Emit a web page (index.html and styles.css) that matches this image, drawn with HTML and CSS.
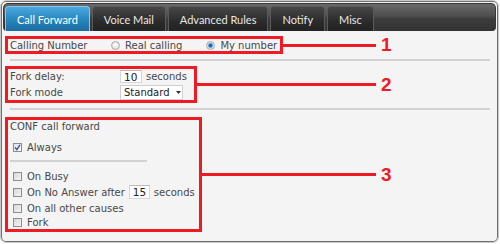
FILE: index.html
```html
<!DOCTYPE html>
<html>
<head>
<meta charset="utf-8">
<link rel="stylesheet" href="styles.css">
</head>
<body>
<div class="frame">
  <nav class="tabbar">
    <span class="tab active">Call Forward</span>
    <span class="tab">Voice Mail</span>
    <span class="tab">Advanced Rules</span>
    <span class="tab">Notify</span>
    <span class="tab">Misc</span>
  </nav>
  <main class="content">
    <section class="annot">
      <div class="box box-calling">
        <span class="label lbl-calling">Calling Number</span>
        <span class="choice"><span class="radio"></span>Real calling</span>
        <span class="choice choice-2"><span class="radio on"></span>My number</span>
      </div>
      <span class="leader"></span><span class="num">1</span>
    </section>
    <div class="rule"></div>
    <section class="annot">
      <div class="box box-fork">
        <div class="frow frow-1"><span class="label lbl-fork">Fork delay:</span><span class="field field-delay">10</span><span class="unit">seconds</span></div>
        <div class="frow frow-2"><span class="label lbl-fork">Fork mode</span><span class="select">Standard<svg class="caret" width="5" height="3" viewBox="0 0 5 3"><path d="M0 0H5L2.5 3Z" fill="#333"/></svg></span></div>
      </div>
      <span class="leader"></span><span class="num">2</span>
    </section>
    <div class="rule rule-2"></div>
    <section class="annot">
      <div class="box box-conf">
        <div class="title">CONF call forward</div>
        <div class="opt opt-always"><span class="cb on"><svg width="7" height="7" viewBox="0 0 7 7"><path d="M1 3.4 L2.8 5.6 L6 0.8" fill="none" stroke="#2b4fa6" stroke-width="1.3"/></svg></span>Always</div>
        <div class="rule rule-short"></div>
        <div class="opts">
          <div class="opt"><span class="cb"></span>On Busy</div>
          <div class="opt"><span class="cb"></span>On No Answer after<span class="field field-na">15</span><span class="unit">seconds</span></div>
          <div class="opt"><span class="cb"></span>On all other causes</div>
          <div class="opt opt-last"><span class="cb"></span>Fork</div>
        </div>
      </div>
      <span class="leader"></span><span class="num">3</span>
    </section>
  </main>
</div>
</body>
</html>
```
FILE: styles.css
```css
* { box-sizing: border-box; margin: 0; padding: 0; }
html, body { width: 500px; height: 244px; background: #ffffff; overflow: hidden; }
body {
  font-family: "DejaVu Sans", Verdana, sans-serif;
  font-size: 10px;
  color: #484848;
}
.frame {
  width: 499px;
  height: 243px;
  border: 1px solid #c9c9c9;
  border-radius: 6px;
  padding: 2px;
  background: #f4f4f4;
  box-shadow: inset 0 0 0 1px #707070;
  display: flex;
  flex-direction: column;
}
.tabbar {
  height: 28px;
  flex: none;
  display: flex;
  align-items: flex-end;
  gap: 2px;
  padding-left: 1px;
  border: 1px solid #383838;
  border-bottom: none;
  border-radius: 5px 5px 4px 4px;
  background: linear-gradient(#6a6a6a, #4e4e4e 45%, #3c3c3c 55%, #333333);
}
.tab {
  height: 25px;
  display: flex;
  align-items: center;
  padding: 0 11px 0 11px;
  border: 1px solid #5a5a5a;
  border-bottom: none;
  border-radius: 4px 4px 0 0;
  background: linear-gradient(#474747, #2b2b2b 60%, #222222);
  color: #e8e8e8;
  font-family: Lato, "DejaVu Sans", sans-serif;
  font-size: 11px;
}
.tab.active {
  background: linear-gradient(#4aa8de, #2a88c0 50%, #1b6c9f);
  border-color: #84c8ee;
  color: #ffffff;
}
.content {
  flex: 1;
  display: flex;
  flex-direction: column;
  padding: 5px 2px 0 2px;
}
.annot {
  width: 388px;
  display: flex;
  align-items: center;
}
.box {
  border: 3px solid #ed1c24;
  padding-left: 2px;
  flex: none;
}
.leader {
  flex: 1;
  height: 3px;
  background: #ed1c24;
}
.num {
  width: 12px;
  margin-left: 5px;
  color: #ed1c24;
  font-family: "Liberation Sans", Arial, sans-serif;
  font-weight: bold;
  font-size: 19px;
  line-height: 16px;
}
.rule {
  height: 2px;
  background: #d2d2d2;
  width: 480px;
  margin: 5px 0 5px 5px;
}
.rule-2 { margin-bottom: 7px; }
.rule-short {
  width: 137px;
  margin: 6px 0 6px 0;
}
.label { flex: none; }
.box-calling {
  height: 18px;
  display: flex;
  align-items: center;
  padding-right: 3px;
}
.lbl-calling { width: 101px; }
.choice { display: flex; align-items: center; }
.choice-2 { margin-left: 24px; }
.radio {
  width: 9px;
  height: 9px;
  border-radius: 50%;
  border: 1px solid #a8a8a8;
  background: radial-gradient(circle at 50% 40%, #ffffff, #d4d4d4);
  margin-right: 5px;
}
.radio.on {
  background: radial-gradient(circle, #1c6cc4 0 1.5px, #7fb0d8 2.2px, #e4e4e4 3px);
}
.box-fork {
  width: 192px;
  height: 37px;
  display: flex;
  flex-direction: column;
}
.frow { display: flex; align-items: center; }
.frow-1 { height: 15px; }
.frow-2 { height: 16px; }
.lbl-fork { width: 110px; }
.field {
  display: flex;
  align-items: center;
  height: 13px;
  background: #ffffff;
  border: 1px solid #d6d6d6;
  border-top-color: #bdbdbd;
  font-size: 10.5px;
  color: #222;
  padding-left: 3px;
}
.field-delay { width: 22px; }
.unit { margin-left: 4px; }
.select {
  display: flex;
  align-items: center;
  flex: none;
  width: 63px;
  height: 15px;
  background: #ffffff;
  border: 1px solid #cfcfcf;
  font-size: 10px;
  color: #222;
  padding-left: 3px;
}
.caret { margin-left: 6px; flex: none; }
.box-conf {
  width: 197px;
  height: 115px;
  display: flex;
  flex-direction: column;
}
.title {
  height: 12px;
  line-height: 12px;
  margin-top: 1px;
}
.opt {
  display: flex;
  align-items: center;
  height: 16px;
  padding-left: 3px;
}
.opt-always { margin-top: 8px; height: 14px; }
.opt-last { height: 13px; }
.cb {
  width: 9px;
  height: 9px;
  flex: none;
  border: 1px solid #8e8e8e;
  background: linear-gradient(135deg, #d6d6d6, #f6f6f6);
  margin-right: 5px;
  display: flex;
  align-items: center;
  justify-content: center;
}
.cb.on { background: linear-gradient(135deg, #e2e2e2, #fafafa); }
.field-na {
  width: 21px;
  height: 14px;
  margin-left: 4px;
}
```
